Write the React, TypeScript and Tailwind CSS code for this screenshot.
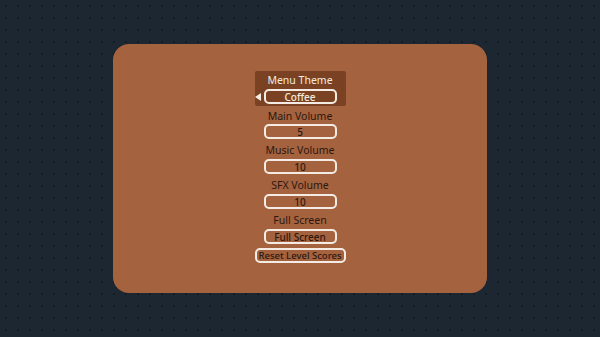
const font = { fontFamily: '"Noto Sans", "Liberation Sans", sans-serif' };

function Field({ label, value, first }: { label: string; value: string; first?: boolean }) {
  return (
    <div className="flex flex-col items-center">
      <div
        className={`${first ? "mt-[4px]" : "mt-[5px]"} h-[12px] text-[10.5px] leading-[12px] text-[#2b1910]`}
      >
        {label}
      </div>
      <div
        className={`${first ? "mt-[2px]" : "mt-[3px]"} flex h-[15px] w-[73px] items-center justify-center rounded-[5px] border-2 border-[#f4ece4] text-[10px] font-medium leading-none text-[#2b1910]`}
      >
        {value}
      </div>
    </div>
  );
}

export default function App() {
  return (
    <div
      style={font}
      className="flex h-[337px] w-[600px] items-center justify-center bg-[#1c2731] bg-[radial-gradient(circle,#141d25_1px,transparent_1.6px)] bg-[length:12px_12px]"
    >
      <div className="flex h-[249px] w-[374px] flex-col items-center rounded-[16px] bg-[#a5623f] pt-[27px]">
        {/* theme picker */}
        <div className="flex w-[91px] flex-col items-center rounded-[2px] bg-[#7a4222] pb-[2px] pt-[3px]">
          <div className="h-[12px] text-[10.5px] leading-[12px] text-[#f3e9df]">Menu Theme</div>
          <div className="relative mt-[3px]">
            <span className="absolute left-[-9px] top-1/2 h-0 w-0 -translate-y-1/2 border-y-[4px] border-r-[6px] border-y-transparent border-r-[#f4ece4]" />
            <div className="flex h-[15px] w-[73px] items-center justify-center rounded-[5px] border-2 border-[#f4ece4] text-[10px] font-medium leading-none text-[#f3e9df]">
              Coffee
            </div>
          </div>
        </div>

        <Field label="Main Volume" value="5" first />
        <Field label="Music Volume" value="10" />
        <Field label="SFX Volume" value="10" />
        <Field label="Full Screen" value="Full Screen" />

        <div className="mt-[4px] flex h-[15px] w-[91px] items-center justify-center whitespace-nowrap rounded-[5px] border-2 border-[#f4ece4] text-[9.5px] font-medium leading-none text-[#2b1910]">
          Reset Level Scores
        </div>
      </div>
    </div>
  );
}
